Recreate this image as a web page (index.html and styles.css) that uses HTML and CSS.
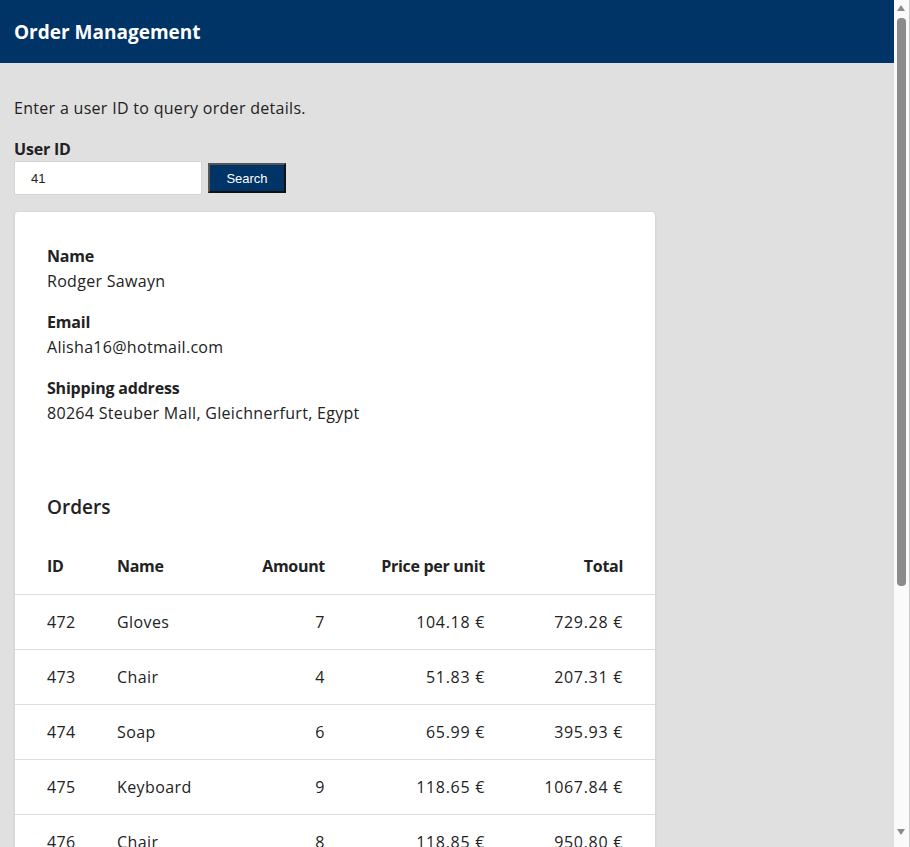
FILE: index.html
```html
<!DOCTYPE html>
<html lang="en">
<head>
<meta charset="utf-8">
<title>Order Management</title>
<link rel="stylesheet" href="styles.css">
</head>
<body>
<header class="topbar">
  <h1 class="topbar-title">Order Management</h1>
</header>
<main class="page">
  <p class="intro">Enter a user ID to query order details.</p>
  <form class="search">
    <label class="search-label" for="uid">User ID</label>
    <div class="search-row">
      <input id="uid" class="search-input" type="text" value="41">
      <button type="button" class="search-btn">Search</button>
    </div>
  </form>
  <section class="card">
    <dl class="details">
      <div class="detail">
        <dt>Name</dt>
        <dd>Rodger Sawayn</dd>
      </div>
      <div class="detail">
        <dt>Email</dt>
        <dd>Alisha16@hotmail.com</dd>
      </div>
      <div class="detail">
        <dt>Shipping address</dt>
        <dd>80264 Steuber Mall, Gleichnerfurt, Egypt</dd>
      </div>
    </dl>
    <h2 class="orders-title">Orders</h2>
    <table class="orders">
      <colgroup>
        <col class="col-id">
        <col class="col-name">
        <col class="col-amount">
        <col class="col-price">
        <col class="col-total">
      </colgroup>
      <thead>
        <tr>
          <th>ID</th>
          <th>Name</th>
          <th class="c-num">Amount</th>
          <th class="c-num">Price per unit</th>
          <th class="c-num">Total</th>
        </tr>
      </thead>
      <tbody>
        <tr><td>472</td><td>Gloves</td><td class="c-num">7</td><td class="c-num">104.18 €</td><td class="c-num">729.28 €</td></tr>
        <tr><td>473</td><td>Chair</td><td class="c-num">4</td><td class="c-num">51.83 €</td><td class="c-num">207.31 €</td></tr>
        <tr><td>474</td><td>Soap</td><td class="c-num">6</td><td class="c-num">65.99 €</td><td class="c-num">395.93 €</td></tr>
        <tr><td>475</td><td>Keyboard</td><td class="c-num">9</td><td class="c-num">118.65 €</td><td class="c-num">1067.84 €</td></tr>
        <tr><td>476</td><td>Chair</td><td class="c-num">8</td><td class="c-num">118.85 €</td><td class="c-num">950.80 €</td></tr>
        <tr><td>477</td><td>Shoes</td><td class="c-num">3</td><td class="c-num">82.40 €</td><td class="c-num">247.20 €</td></tr>
      </tbody>
    </table>
  </section>
</main>
<div class="scrollbar" aria-hidden="true">
  <span class="sb-arrow sb-up"></span>
  <span class="sb-thumb"></span>
  <span class="sb-arrow sb-down"></span>
</div>
</body>
</html>
```

FILE: styles.css
```css
html, body {
  margin: 0;
  padding: 0;
}
body {
  background: #e0e0e0;
  color: #222;
  font-family: "Open Sans", "Noto Sans", sans-serif;
  font-size: 16px;
}
.topbar {
  background: #003366;
  height: 63px;
  display: flex;
  align-items: center;
  padding: 0 14px;
}
.topbar-title {
  margin: 0;
  color: #fff;
  font-size: 19px;
  font-weight: 700;
}
.page {
  padding: 24px 14px 40px;
}
.intro {
  margin: 9px 0 17px;
  line-height: 24px;
  letter-spacing: 0.3px;
}
.search-label {
  display: block;
  font-weight: 700;
  line-height: 24px;
  letter-spacing: -0.2px;
}
.search-row {
  display: flex;
  align-items: center;
  gap: 6px;
}
.search-input {
  box-sizing: border-box;
  width: 188px;
  height: 34px;
  margin: 0;
  border: 1px solid #d4d4d4;
  background: #fff;
  padding: 0 16px;
  font-family: "Liberation Sans", Arial, sans-serif;
  font-size: 13px;
  color: #222;
}
.search-btn {
  box-sizing: border-box;
  width: 78px;
  height: 30px;
  margin: 0;
  background: #003366;
  color: #fff;
  border: 2px solid;
  border-color: #555 #111 #111 #555;
  font-family: "Liberation Sans", Arial, sans-serif;
  font-size: 13px;
}
.card {
  margin-top: 16px;
  width: 642px;
  box-sizing: border-box;
  background: #fff;
  border: 1px solid #d8d8d8;
  border-radius: 4px;
  box-shadow: 0 1px 2px rgba(0,0,0,0.08);
  padding: 32px 0 0;
}
.details {
  margin: 0;
  padding: 0 32px;
}
.detail {
  margin-bottom: 16px;
}
.detail dt {
  font-weight: 700;
  line-height: 25px;
  letter-spacing: -0.2px;
}
.detail dd {
  margin: 0;
  line-height: 25px;
  letter-spacing: 0.3px;
}
.orders-title {
  margin: 69px 0 20px;
  padding: 0 32px;
  font-size: 19px;
  font-weight: 600;
  line-height: 24px;
}
.orders {
  width: 100%;
  border-collapse: collapse;
  table-layout: fixed;
}
.col-id { width: 86px; }
.col-name { width: 120px; }
.col-amount { width: 120px; }
.col-price { width: 160px; }
.col-total { width: 154px; }
.orders th, .orders td {
  box-sizing: border-box;
  height: 55px;
  padding: 0 16px;
  text-align: left;
  vertical-align: middle;
  white-space: nowrap;
}
.orders th {
  font-weight: 700;
  letter-spacing: -0.3px;
  border-bottom: 1px solid #ddd;
}
.orders td {
  border-bottom: 1px solid #ddd;
  letter-spacing: 0.4px;
}
.orders td.c-num {
  letter-spacing: 0.7px;
}
.orders th:first-child, .orders td:first-child {
  padding-left: 32px;
}
.orders th:last-child, .orders td:last-child {
  padding-right: 32px;
}
.orders .c-num {
  text-align: right;
}

/* decorative scrollbar overlay matching the captured window chrome */
.scrollbar {
  position: fixed;
  top: 0;
  right: 0;
  width: 16px;
  height: 100%;
  background: #fafafa;
  border-right: 1px solid #c8c8c8;
  box-sizing: border-box;
}
.sb-thumb {
  position: absolute;
  left: 3px;
  top: 18px;
  width: 9px;
  height: 568px;
  background: #8b8b8b;
  border-radius: 4px;
}
.sb-arrow {
  position: absolute;
  left: 3px;
  width: 0;
  height: 0;
  border-left: 4.5px solid transparent;
  border-right: 4.5px solid transparent;
}
.sb-up {
  top: 5px;
  border-bottom: 6px solid #8b8b8b;
}
.sb-down {
  bottom: 12px;
  border-top: 6px solid #8b8b8b;
}
```
